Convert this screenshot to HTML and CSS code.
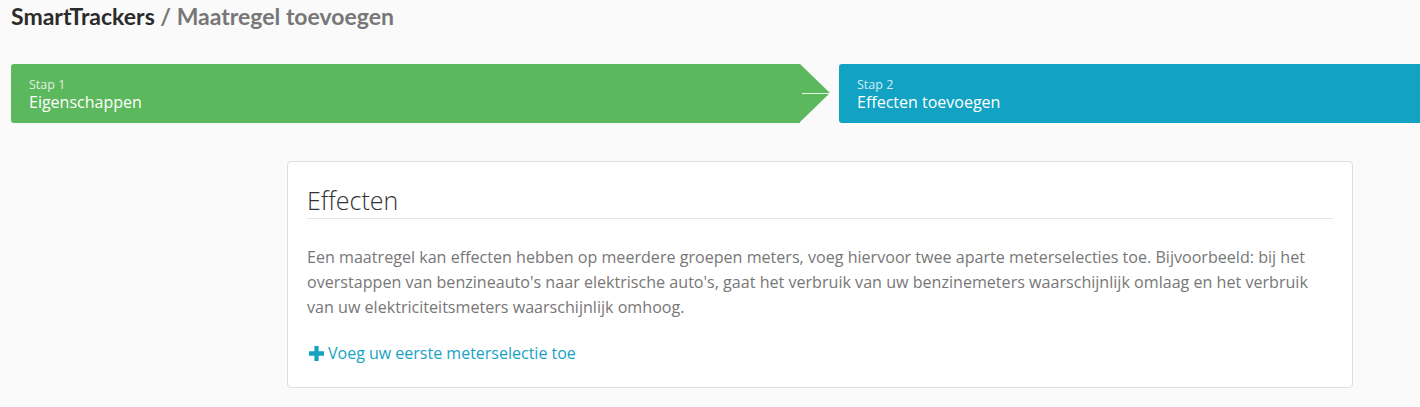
FILE: index.html
```html
<!DOCTYPE html>
<html lang="nl">
<head>
  <meta charset="UTF-8">
  <title>SmartTrackers / Maatregel toevoegen</title>
  <link rel="stylesheet" href="styles.css">
</head>
<body>
  <h1 class="page-title">SmartTrackers <span class="sub">/ Maatregel toevoegen</span></h1>

  <!-- Stappen -->
  <div class="steps">
    <div class="step step-done">
      <span class="step-nr">Stap 1</span>
      <span class="step-name">Eigenschappen</span>
      <span class="step-arrow"></span>
    </div>
    <div class="step step-active">
      <span class="step-nr">Stap 2</span>
      <span class="step-name">Effecten toevoegen</span>
    </div>
  </div>

  <div class="content">
    <div class="card">
      <h2 class="card-title">Effecten</h2>
      <p class="card-text">Een maatregel kan effecten hebben op meerdere groepen meters, voeg hiervoor twee aparte meterselecties toe. Bijvoorbeeld: bij het overstappen van benzineauto's naar elektrische auto's, gaat het verbruik van uw benzinemeters waarschijnlijk omlaag en het verbruik van uw elektriciteitsmeters waarschijnlijk omhoog.</p>
      <a class="add-link" href="#">
        <svg width="15" height="15" viewBox="0 0 14 14"><path d="M5 0h4v5h5v4H9v5H5V9H0V5h5z" fill="currentColor"/></svg>
        Voeg uw eerste meterselectie toe
      </a>
    </div>
  </div>
</body>
</html>
```

FILE: styles.css
```css
body {
  margin: 0;
  background-color: #fafafa;
  font-family: "Open Sans", sans-serif;
  overflow: hidden;
}
.page-title {
  margin: 0;
  padding: 3px 11px 0;
  font-family: Lato, sans-serif;
  font-size: 23px;
  font-weight: bold;
  color: #2b2b2b;
  line-height: 26px;
}
.page-title .sub {
  color: #777;
}
.steps {
  display: flex;
  margin: 35px 0 0 11px;
  gap: 39px;
  width: 1460px;
}
.step {
  position: relative;
  display: flex;
  flex-direction: column;
  justify-content: center;
  height: 59px;
  padding-left: 18px;
  box-sizing: border-box;
  color: #fff;
  border-radius: 3px;
}
.step-done {
  flex: none;
  width: 789px;
  background-color: #5cb85c;
  border-radius: 3px 0 0 3px;
}
.step-active {
  flex: 1;
  background-color: #12a3c4;
}
.step-nr {
  font-size: 12.5px;
  line-height: 15px;
  opacity: 0.8;
  margin-top: 2px;
}
.step-name {
  font-size: 16px;
  line-height: 20px;
}
.step-arrow {
  position: absolute;
  left: 100%;
  top: 0;
  width: 0;
  height: 0;
  border-top: 29.5px solid transparent;
  border-bottom: 29.5px solid transparent;
  border-left: 30px solid #5cb85c;
}
.step-arrow::after {
  content: "";
  position: absolute;
  left: -28px;
  top: 0;
  width: 28px;
  height: 1px;
  background-color: rgba(255, 255, 255, 0.85);
}
.content {
  padding: 38px 0 0 287px;
}
.card {
  width: 1066px;
  box-sizing: border-box;
  background-color: #fff;
  border: 1px solid #ddd;
  border-radius: 4px;
  padding: 20px 19px 21px;
}
.card-title {
  margin: 0;
  font-size: 25px;
  font-weight: 300;
  color: #333;
  line-height: 36px;
  border-bottom: 1px solid #e5e5e5;
}
.card-text {
  margin: 26px 0 0;
  font-size: 16.1px;
  line-height: 25px;
  color: #777;
}
.add-link {
  display: inline-flex;
  align-items: center;
  gap: 4px;
  margin: 22px 0 0 2px;
  font-size: 16px;
  color: #17a2c4;
  text-decoration: none;
}
```
